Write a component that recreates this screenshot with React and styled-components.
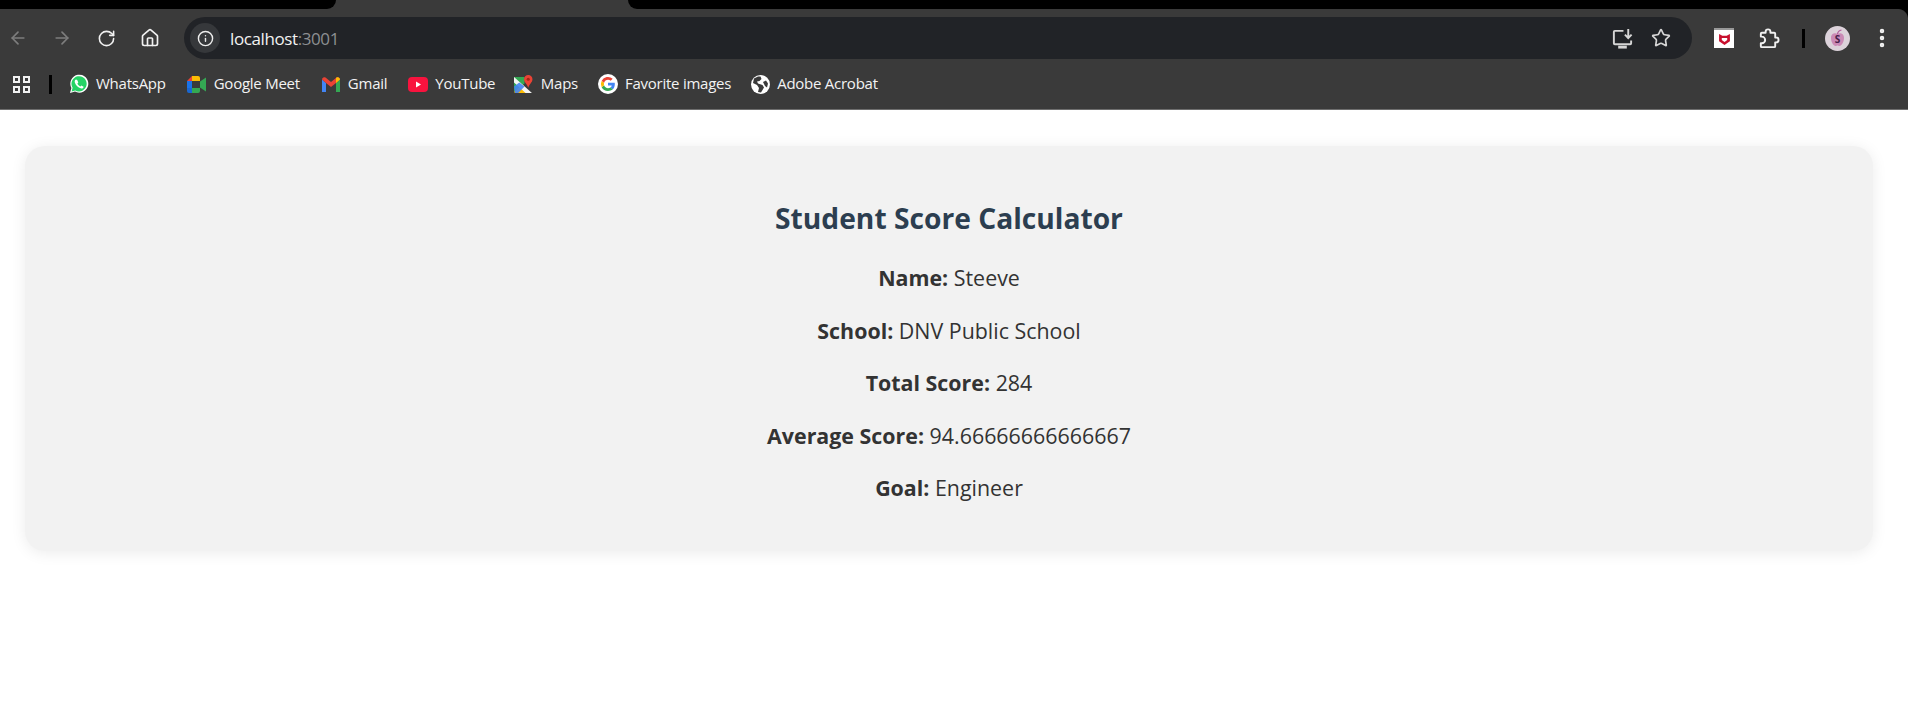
import React from 'react';
import styled, { createGlobalStyle } from 'styled-components';
import { ArrowLeft, ArrowRight, RotateCw, Home, Info, Star, EllipsisVertical } from 'lucide-react';

const GlobalStyle = createGlobalStyle`
  html, body {
    margin: 0;
    padding: 0;
    background: #fff;
  }
  body {
    font-family: "Open Sans", "Noto Sans", sans-serif;
  }
`;

const Frame = styled.header`
  position: relative;
  background: #3a3a3a;
  border-bottom: 1px solid #6e6e6e;

  /* rounded top right corner of the window frame */
  &::after {
    content: '';
    position: absolute;
    top: 9px;
    right: 0;
    width: 10px;
    height: 10px;
    background: radial-gradient(circle at 0 100%, transparent 9.5px, #000 10.5px);
  }
`;

const TabStrip = styled.div`
  display: flex;
  justify-content: space-between;
  height: 9px;
`;

const TabGap = styled.div`
  width: ${p => p.$w}px;
  background: #000;
  border-bottom-${p => p.$side}-radius: 9px;
`;

const Toolbar = styled.div`
  display: flex;
  align-items: center;
  height: 42px;
  margin-top: 8px;
  padding-left: 6px;
`;

const NavButton = styled.span`
  display: flex;
  justify-content: center;
  width: ${p => p.$w || 44}px;
  color: ${p => (p.$off ? '#7d7d7d' : '#f1f1f1')};
`;

const AddressBar = styled.div`
  flex: 1;
  display: flex;
  align-items: center;
  height: 42px;
  margin-left: 2px;
  padding: 0 21px 0 6px;
  border-radius: 21px;
  background: #212327;
`;

const InfoChip = styled.span`
  display: flex;
  align-items: center;
  justify-content: center;
  width: 30px;
  height: 30px;
  border-radius: 50%;
  background: #36383b;
  color: #eee;
`;

const Url = styled.span`
  margin-left: 10px;
  flex: 1;
  font-size: 17px;
  color: #f2f2f2;
  letter-spacing: -0.4px;
  em {
    font-style: normal;
    color: #8d8f92;
  }
`;

const BarIcons = styled.span`
  display: flex;
  align-items: center;
  gap: 17px;
  color: #d6d6d6;
`;

const ExtArea = styled.div`
  display: flex;
  align-items: center;
  width: 216px;
  padding-left: 22px;
  box-sizing: border-box;
  color: #f1f1f1;
`;

const McAfee = styled.span`
  display: flex;
  align-items: center;
  justify-content: center;
  width: 20px;
  height: 20px;
  box-sizing: border-box;
  background: #fff;
  border-top: 2px solid #999;
`;

const Divider = styled.span`
  display: block;
  width: 3px;
  height: 19px;
  background: #000;
`;

const BookmarkBar = styled.nav`
  display: flex;
  align-items: center;
  height: 50px;
  padding-left: 13px;
`;

const AppsIcon = styled.span`
  display: grid;
  grid-template-columns: 7px 7px;
  gap: 3px;
  margin-right: 19px;
  i {
    display: block;
    height: 7px;
    box-sizing: border-box;
    border: 2px solid #f1f1f1;
  }
`;

const Bookmark = styled.span`
  display: flex;
  align-items: center;
  gap: 7px;
  margin-left: ${p => p.$gap ?? 21}px;
  font-size: 15px;
  color: #f3f3f3;
  letter-spacing: -0.25px;
`;

const BookmarkIcon = styled.span`
  display: flex;
  align-items: center;
  justify-content: center;
  width: 20px;
`;

const BookmarkLabel = styled.span`
  padding-bottom: 2px;
`;

const Page = styled.main`
  padding: 36px 35px 0 25px;
  height: 572px;
  box-sizing: border-box;
`;

const Card = styled.section`
  height: 405px;
  box-sizing: border-box;
  padding-top: 52px;
  border-radius: 20px;
  background: #f2f2f2;
  box-shadow: 0 2px 15px rgba(0, 0, 0, 0.08);
  text-align: center;
`;

const Title = styled.h2`
  margin: 0 0 23px;
  font-size: 28.2px;
  line-height: 40px;
  font-weight: 700;
  color: #2c3e50;
`;

const Row = styled.p`
  margin: 0 0 19.6px;
  font-size: 21.4px;
  line-height: 33px;
  color: #333;
  strong {
    font-weight: 700;
  }
`;

const WhatsAppIcon = () => (
  <svg width="20" height="20" viewBox="0 0 20 20">
    <path d="M1 19l1.400-5A9 9 0 1 1 6 17.600z" fill="#fff" />
    <path d="M2.600 17.400l1-3.600A7.600 7.600 0 1 1 6.300 16.400z" fill="#25d366" />
    <path d="M7 5.600c-.5 0-1.300.8-1.300 2 0 2.600 3.400 6.400 6.600 6.900 1.300.2 2.300-.9 2.300-1.800l-2.200-1.200-1 1.100c-1.200-.4-2.600-1.900-3-3l.9-1-1.100-2.600z" fill="#fff" />
  </svg>
);

const MeetIcon = () => (
  <svg width="19" height="17" viewBox="0 0 19 17">
    <path d="M0 5l5-5v5z" fill="#ea4335" />
    <path d="M5 0h6a2 2 0 0 1 2 2v3H5z" fill="#fbbc04" />
    <path d="M0 5h5v7H0z" fill="#1a73e8" />
    <path d="M0 12h5v5H2a2 2 0 0 1-2-2z" fill="#1967d2" />
    <path d="M5 12h8v3a2 2 0 0 1-2 2H5z" fill="#34a853" />
    <path d="M13 5.500l6-4v14l-6-4z" fill="#34a853" />
  </svg>
);

const GmailIcon = () => (
  <svg width="18" height="15" viewBox="0 0 18 15">
    <path d="M0 2.500V15h4V6z" fill="#4285f4" />
    <path d="M18 2.500V15h-4V6z" fill="#34a853" />
    <path d="M0 2.500C0 .5 2 -.5 3.500.6L9 5l5.500-4.400C16-.5 18 .5 18 2.500L14 6 9 10 4 6z" fill="#ea4335" />
    <path d="M14 .9l.5-.3C16-.5 18 .5 18 2.500L14 6z" fill="#fbbc04" />
  </svg>
);

const YouTubeIcon = () => (
  <svg width="20" height="15" viewBox="0 0 20 15">
    <rect width="20" height="15" rx="4" fill="#f8133e" />
    <path d="M8 4.500l5 3-5 3z" fill="#fff" />
  </svg>
);

const MapsIcon = () => (
  <svg width="19" height="19" viewBox="0 0 18 18">
    <path d="M0 2h10v6L0 16z" fill="#34a853" />
    <path d="M0 16l8-7 7 7.500V17H1z" fill="#fbbc04" />
    <path d="M0 2l17 15H11L0 7z" fill="#f4f4f4" />
    <path d="M0 11l5-4 5 4-6 6H1z" fill="#4285f4" opacity="0.9" />
    <path d="M13.500 0A4 4 0 0 1 17.500 4c0 3-3 4.500-4 8-1-3.500-4-5-4-8a4 4 0 0 1 4-4z" fill="#ea4335" />
    <circle cx="13.500" cy="4" r="1.500" fill="#a52714" />
  </svg>
);

const GoogleIcon = () => (
  <svg width="20" height="20" viewBox="0 0 20 20">
    <circle cx="10" cy="10" r="10" fill="#fff" />
    <path d="M16.800 10.200c0-.6 0-1-.1-1.500H10v2.800h3.800a3.400 3.400 0 0 1-1.400 2.100l2.300 1.800c1.300-1.300 2.100-3 2.100-5.200z" fill="#4285f4" />
    <path d="M10 17c1.900 0 3.500-.6 4.700-1.700l-2.300-1.800c-.6.400-1.400.7-2.400.7-1.800 0-3.400-1.200-3.900-2.900l-2.400 1.900A7 7 0 0 0 10 17z" fill="#34a853" />
    <path d="M6.100 11.300a4 4 0 0 1 0-2.600L3.700 6.800a7 7 0 0 0 0 6.400z" fill="#fbbc04" />
    <path d="M10 5.800c1 0 2 .4 2.700 1l2-2A7 7 0 0 0 3.700 6.800l2.400 1.900C6.600 7 8.200 5.800 10 5.800z" fill="#ea4335" />
  </svg>
);

const GlobeIcon = () => (
  <svg width="19" height="19" viewBox="0 0 19 19">
    <circle cx="9.500" cy="9.500" r="9.500" fill="#fff" />
    <path d="M7 1.500L3 3.500 2 8l4 2 2 3-1 4 3 .5 3-5-1.500-2.500L7 8.500 6 6.500l2.500-.5 2-2-1-2.500z" fill="#3a3a3a" />
    <path d="M12 7l3-1.500 2 3-1 4-2-1.500z" fill="#3a3a3a" />
  </svg>
);

const McAfeeMark = () => (
  <svg width="13" height="13" viewBox="0 0 12 12">
    <path d="M1 1l3 1.500h4L11 1v6.500L6 11 1 7.500z" fill="#c8102e" />
    <path d="M3.500 4.500h5v2L6 8.300 3.500 6.500z" fill="#fff" />
  </svg>
);

const InstallIcon = () => (
  <svg width="23" height="23" viewBox="0 0 24 24" fill="none" stroke="currentColor" strokeWidth="2">
    <path d="M13 4H4a1 1 0 0 0-1 1v12a1 1 0 0 0 1 1h16a1 1 0 0 0 1-1v-3" />
    <path d="M7.500 21h9" strokeWidth="3" />
    <path d="M18 2v9M14.500 8l3.500 3.500L21.500 8" />
  </svg>
);

const ExtensionIcon = () => (
  <svg width="23" height="23" viewBox="0 0 24 24" fill="none" stroke="currentColor" strokeWidth="2" strokeLinejoin="round">
    <path d="M5 21h13a1 1 0 0 0 1-1v-4h1a2.500 2.500 0 0 0 0-5h-1V7a1 1 0 0 0-1-1h-4V5a2.500 2.500 0 0 0-5 0v1H5a1 1 0 0 0-1 1v3h1a3.500 3.500 0 0 1 0 7H4v3a1 1 0 0 0 1 1z" />
  </svg>
);

const AvatarIcon = () => (
  <svg width="25" height="25" viewBox="0 0 25 25">
    <circle cx="12.500" cy="12.500" r="12.500" fill="#dcd2da" />
    <path d="M12.500 8c-2-1.500-6.500-.8-6.500 4 0 4 2.500 8 4.500 8 1 0 1.300-.5 2-.5s1 .5 2 .5c2 0 4.500-4 4.500-8 0-4.800-4.500-5.500-6.500-4z" fill="#cb8ab6" />
    <path d="M12.500 8c.3-2 1.500-3.500 4-4" fill="none" stroke="#b25f9c" strokeWidth="1.200" />
    <text x="12.500" y="17" textAnchor="middle" fontSize="10" fontWeight="700" fill="#47204a">S</text>
  </svg>
);

const bookmarks = [
  { label: 'Google Meet', icon: <MeetIcon /> },
  { label: 'Gmail', icon: <GmailIcon /> },
  { label: 'YouTube', icon: <YouTubeIcon /> },
  { label: 'Maps', icon: <MapsIcon />, gap: 18.6 },
  { label: 'Favorite images', icon: <GoogleIcon />, gap: 20 },
  { label: 'Adobe Acrobat', icon: <GlobeIcon />, gap: 19 },
];

const rows = [
  ['Name:', 'Steeve'],
  ['School:', 'DNV Public School'],
  ['Total Score:', '284'],
  ['Average Score:', '94.66666666666667'],
  ['Goal:', 'Engineer'],
];

export default function App() {
  return (
    <>
      <GlobalStyle />
      <Frame>
        <TabStrip>
          <TabGap $w={336} $side="right" />
          <TabGap $w={1280} $side="left" />
        </TabStrip>
        <Toolbar>
          <NavButton $off $w={24}><ArrowLeft size={20} /></NavButton>
          <NavButton $off $w={64}><ArrowRight size={20} /></NavButton>
          <NavButton $w={24}><RotateCw size={19} /></NavButton>
          <NavButton $w={64}><Home size={20} /></NavButton>
          <AddressBar>
            <InfoChip><Info size={17} /></InfoChip>
            <Url>localhost<em>:3001</em></Url>
            <BarIcons>
              <InstallIcon />
              <Star size={20} />
            </BarIcons>
          </AddressBar>
          <ExtArea>
            <McAfee><McAfeeMark /></McAfee>
            <NavButton $w={68}><ExtensionIcon /></NavButton>
            <Divider />
            <NavButton $w={65}><AvatarIcon /></NavButton>
            <NavButton $w={24}><EllipsisVertical size={24} strokeWidth={2.5} /></NavButton>
          </ExtArea>
        </Toolbar>
        <BookmarkBar>
          <AppsIcon><i /><i /><i /><i /></AppsIcon>
          <Divider />
          <Bookmark $gap={17}>
            <BookmarkIcon><WhatsAppIcon /></BookmarkIcon>
            <BookmarkLabel>WhatsApp</BookmarkLabel>
          </Bookmark>
          {bookmarks.map(b => (
            <Bookmark key={b.label} $gap={b.gap}>
              <BookmarkIcon>{b.icon}</BookmarkIcon>
              <BookmarkLabel>{b.label}</BookmarkLabel>
            </Bookmark>
          ))}
        </BookmarkBar>
      </Frame>
      <Page>
        <Card>
          <Title>Student Score Calculator</Title>
          {rows.map(([k, v]) => (
            <Row key={k}><strong>{k}</strong> {v}</Row>
          ))}
        </Card>
      </Page>
    </>
  );
}
